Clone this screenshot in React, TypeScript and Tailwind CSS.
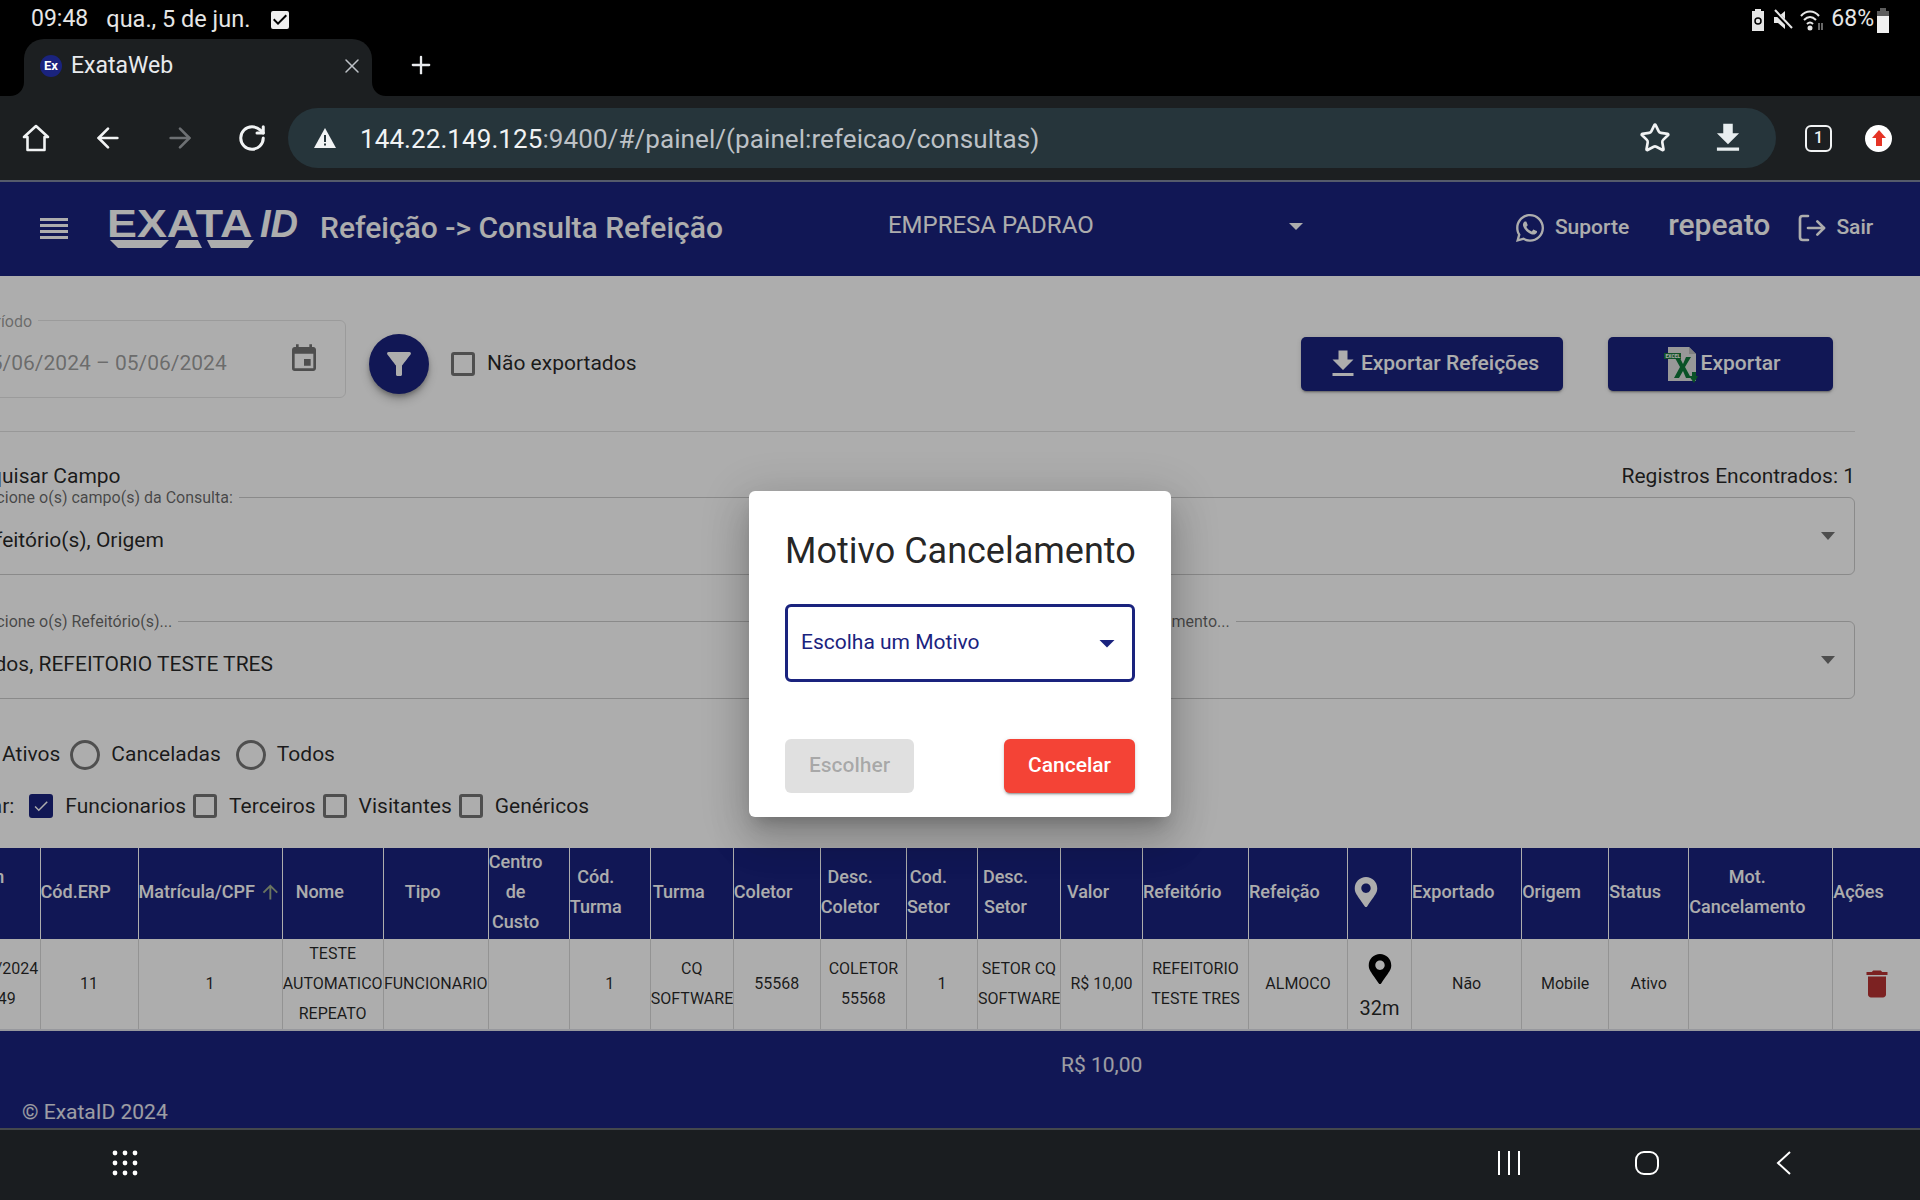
import React from 'react';
import { ArrowLeft, ArrowRight, RotateCw, Star, X, Plus, LogOut } from 'lucide-react';
import { FaWhatsapp, FaMapMarkerAlt } from 'react-icons/fa';
import { MdFilterAlt, MdEvent, MdFileDownload, MdArrowUpward, MdDelete, MdArrowDropDown, MdCheck, MdCheckBox } from 'react-icons/md';

const columns = [
    { w: 'w-[88px]', head: ['Admin', 'Data'], pad: '', cell: ['05/06/2024', '09:49'] },
    { w: 'w-[98px]', head: ['Cód.ERP'], pad: '', cell: ['11'] },
    { w: 'w-[144px]', head: ['Matrícula/CPF'], pad: '', cell: ['1'], sort: true },
    { w: 'w-[101px]', head: ['Nome'], pad: 'pl-[13px]', cell: ['TESTE', 'AUTOMATICO', 'REPEATO'] },
    { w: 'w-[105px]', head: ['Tipo'], pad: 'pl-[21px]', cell: ['FUNCIONARIO'] },
    { w: 'w-[81px]', head: ['Centro', 'de', 'Custo'], pad: '', cell: [''] },
    { w: 'w-[81px]', head: ['Cód.', 'Turma'], pad: '', cell: ['1'] },
    { w: 'w-[83px]', head: ['Turma'], pad: 'pl-[2px]', cell: ['CQ', 'SOFTWARE'] },
    { w: 'w-[87px]', head: ['Coletor'], pad: '', cell: ['55568'] },
    { w: 'w-[86px]', head: ['Desc.', 'Coletor'], pad: '', cell: ['COLETOR', '55568'] },
    { w: 'w-[71px]', head: ['Cod.', 'Setor'], pad: '', cell: ['1'] },
    { w: 'w-[83px]', head: ['Desc.', 'Setor'], pad: 'pl-[5px]', cell: ['SETOR CQ', 'SOFTWARE'] },
    { w: 'w-[82px]', head: ['Valor'], pad: 'pl-[6px]', cell: ['R$ 10,00'] },
    { w: 'w-[106px]', head: ['Refeitório'], pad: '', cell: ['REFEITORIO', 'TESTE TRES'] },
    { w: 'w-[99px]', head: ['Refeição'], pad: '', cell: ['ALMOCO'] },
    { w: 'w-[64px]', head: [], pad: 'pl-[3px]', cell: [], pin: true },
    { w: 'w-[110px]', head: ['Exportado'], pad: '', cell: ['Não'] },
    { w: 'w-[87px]', head: ['Origem'], pad: '', cell: ['Mobile'] },
    { w: 'w-[80px]', head: ['Status'], pad: '', cell: ['Ativo'] },
    { w: 'w-[144px]', head: ['Mot.', 'Cancelamento'], pad: '', cell: [''] },
    { w: 'w-[87px]', head: ['Ações'], pad: '', cell: [], trash: true },
];

const Checkbox = ({ checked, label }: { checked?: boolean; label: string }) => (
    <label className="flex items-center text-[21px] text-black/85">
        <span className={`w-[24px] h-[24px] rounded-[3px] border-[3px] flex items-center justify-center ${checked ? 'bg-[#1a237e] border-[#1a237e]' : 'border-[#757575]'}`}>
            {checked && <MdCheck size={22} className="text-white" />}
        </span>
        <span className="ml-[12px]">{label}</span>
    </label>
);

const Radio = ({ label, className }: { label: string; className?: string }) => (
    <label className={`flex items-center text-[21px] text-black/85 ${className ?? ''}`}>
        <span className="w-[30px] h-[30px] rounded-full border-[3px] border-[#757575]"></span>
        <span className="ml-[11px]">{label}</span>
    </label>
);

const OutlinedSelect = ({ label, value, className }: { label: string; value?: string; className: string }) => (
    <div className={`relative h-[78px] rounded-[6px] border border-black/20 flex items-center pl-[18px] pr-[19px] ${className}`}>
        <span className="absolute left-[7px] -top-[11px] bg-white px-[6px] text-[16px] leading-[22px] text-black/60 whitespace-nowrap">{label}</span>
        <span className="flex-1 text-[21px] text-black/85 whitespace-nowrap pt-[9px]">{value}</span>
        <span className="w-0 h-0 border-l-[7px] border-r-[7px] border-t-[8px] border-l-transparent border-r-transparent border-t-black/55"></span>
    </div>
);

const ExcelIcon = () => (
    <svg width="40" height="40" viewBox="0 0 40 40">
        <path d="M7 3h21l7 7v27H7z" fill="#e0e0e0" />
        <path d="M28 3v7h7z" fill="#bdbdbd" />
        <path d="M3 9h17v6H3z" fill="#1b7a3d" />
        <text x="4.500" y="14" fontSize="5" fontWeight="700" fill="#ffffff">EXCEL</text>
        <path d="M14 14h5l3 6 3-7h5l-6 10 6 11h-5l-3-7-4 7h-5l6-11z" fill="#0f7a3a" />
        <path d="M31 28h4v4h2l-4 7-5-7h3z" fill="#0f7a3a" />
    </svg>
);

const App: React.FC = () => {
    return (
        <div className="w-[1920px] h-[1200px] overflow-hidden flex flex-col bg-black font-['Roboto',sans-serif]">
            {/* status bar */}
            <div className="h-[39px] shrink-0 flex items-center pl-[31px] pr-[31px] text-[23px] text-[#e6e6e6]">
                <span>09:48</span>
                <span className="ml-[18px] text-[23.500px]">qua., 5 de jun.</span>
                <MdCheckBox size={24} className="ml-[18px] text-[#eeeeee]" />
                <div className="flex-1"></div>
                <svg width="14" height="22" viewBox="0 0 14 22"><path d="M4 0h6v2h3v20H1V2h3z" fill="#e6e6e6" /><circle cx="7" cy="12" r="3" fill="none" stroke="#000" strokeWidth="1.500" /></svg>
                <svg width="20" height="22" viewBox="0 0 20 22" className="ml-[8px]" fill="#e6e6e6">
                    <path d="M1 8h4l7-6v18l-7-6H1z" />
                    <path d="M1 2 19 20" stroke="#000" strokeWidth="4" />
                    <path d="M2 1 19 19" stroke="#e6e6e6" strokeWidth="2" />
                </svg>
                <svg width="24" height="22" viewBox="0 0 24 22" className="ml-[7px]" fill="none" stroke="#e6e6e6" strokeWidth="2">
                    <path d="M1 7c5-6 13-6 18 0M4 11c4-4 8-4 12 0M7 15c2-2 4-2 6 0" />
                    <circle cx="10" cy="19" r="1.500" fill="#e6e6e6" />
                    <path d="M19 14v7M22 21v-7" stroke="#8a8a8a" strokeWidth="1.500" />
                </svg>
                <span className="ml-[7px]">68%</span>
                <svg width="12" height="26" viewBox="0 0 12 26" className="ml-[3px]"><path d="M3 1h6v3h3v22H0V4h3z" fill="#5c5c5c" /><path d="M0 9h12v17H0z" fill="#f0f0f0" /></svg>
            </div>

            {/* tab strip */}
            <div className="h-[57px] shrink-0 flex items-center">
                <div className="relative ml-[24px] w-[348px] h-[57px] rounded-t-[20px] bg-[#1c1f21] flex items-center pl-[16px] pr-[8px] pb-[3px] text-[#e8eaed]">
                    <svg width="14" height="14" viewBox="0 0 14 14" className="absolute -left-[14px] bottom-0"><path d="M14 0v14H0C8 14 14 8 14 0z" fill="#1c1f21" /></svg>
                    <svg width="14" height="14" viewBox="0 0 14 14" className="absolute -right-[14px] bottom-0"><path d="M0 0v14h14C6 14 0 8 0 0z" fill="#1c1f21" /></svg>
                    <span className="w-[22px] h-[22px] rounded-full bg-[#1a237e] flex items-center justify-center text-[13px] font-bold text-white">Ex</span>
                    <span className="ml-[9px] flex-1 text-[23px]">ExataWeb</span>
                    <X size={24} className="text-[#bdc1c6]" strokeWidth={1.5} />
                </div>
                <Plus size={28} className="ml-[35px] mb-[6px] text-[#e8eaed]" strokeWidth={2} />
            </div>

            {/* browser toolbar */}
            <div className="h-[84px] shrink-0 bg-[#1c1f21] flex items-center">
                <svg width="30" height="30" viewBox="0 0 30 30" className="ml-[21px]" fill="none" stroke="#f1f3f4" strokeWidth="2.6" strokeLinejoin="round">
                    <path d="M15 3 3 14h3.5v13h17V14H27z" />
                </svg>
                <ArrowLeft size={32} className="ml-[41px] text-[#f1f3f4]" strokeWidth={2} />
                <ArrowRight size={32} className="ml-[40px] text-[#6d7073]" strokeWidth={2} />
                <RotateCw size={30} className="ml-[41px] text-[#f1f3f4]" strokeWidth={2.4} />
                <div className="ml-[21px] w-[1488px] h-[60px] rounded-full bg-[#26353b] flex items-center pl-[25px] pr-[29px]">
                    <svg width="24" height="22" viewBox="0 0 24 22"><path d="M12 1 23 21H1z" fill="#f1f3f4" /><path d="M11 8h2v7h-2zM11 16.500h2v2h-2z" fill="#26353b" /></svg>
                    <span className="ml-[23px] pt-[2px] flex-1 text-[26px] tracking-[0.08px] text-[#bdc1c6] whitespace-nowrap"><span className="text-[#f1f3f4]">144.22.149.125</span>:9400/#/painel/(painel:refeicao/consultas)</span>
                    <Star size={32} className="text-[#f1f3f4]" strokeWidth={2} />
                    <MdFileDownload size={38} className="ml-[38px] text-[#e8eef0]" />
                </div>
                <div className="ml-[29px] w-[27px] h-[27px] rounded-[6px] border-[2.500px] border-[#f1f3f4] flex items-center justify-center text-[16px] font-medium text-[#f1f3f4]">1</div>
                <div className="ml-[33px] w-[27px] h-[27px] rounded-full bg-white flex items-center justify-center">
                    <svg width="14" height="16" viewBox="0 0 14 16" fill="#e53325"><path d="M7 0 14 8H10V16H4V8H0z" /></svg>
                </div>
            </div>

            {/* web page */}
            <div className="relative flex-1 min-h-0 flex flex-col border-t-2 border-[#555b6b] overflow-hidden bg-white">
                <header className="h-[94px] shrink-0 bg-[#1a237e] flex items-center text-white">
                    <svg width="28" height="22" viewBox="0 0 28 22" className="ml-[40px]" fill="currentColor">
                        <rect y="0" width="28" height="3" /><rect y="6" width="28" height="3" /><rect y="12" width="28" height="3" /><rect y="18" width="28" height="3" />
                    </svg>
                    <div className="relative ml-[39px] w-[190px] h-[40px] whitespace-nowrap font-['Liberation_Sans',sans-serif] text-[38px] leading-[30px]">
                        <span className="absolute left-0 top-0 origin-left scale-x-[1.18] font-bold">EXATA</span>
                        <span className="absolute left-[153px] top-0 italic font-bold">ID</span>
                        <svg width="147" height="9" viewBox="0 0 147 9" className="absolute left-0 bottom-0"><path d="M3 0h59l-4 4-4 4H11zM72 0h19l4 8H68zM100 0h47l-6 8H104z" fill="currentColor" /></svg>
                    </div>
                    <h1 className="ml-[23px] -mt-[4px] text-[30px] font-medium whitespace-nowrap">Refeição -&gt; Consulta Refeição</h1>
                    <span className="ml-[165px] text-[24px] w-[402px] -mt-[9px]">EMPRESA PADRAO</span>
                    <span className="-ml-[1px] -mt-[6px] w-0 h-0 border-l-[7px] border-r-[7px] border-t-[7px] border-l-transparent border-r-transparent border-t-white"></span>
                    <FaWhatsapp size={32} className="ml-[211px] -mt-[2px]" />
                    <span className="ml-[9px] -mt-[2px] text-[21px] font-medium">Suporte</span>
                    <span className="ml-[39px] text-[30px] font-medium -mt-[10px]">repeato</span>
                    <LogOut size={32} className="ml-[26px] -mt-[2px] -scale-x-100 rotate-180" strokeWidth={2} />
                    <span className="ml-[8px] -mt-[2px] text-[21px] font-medium">Sair</span>
                </header>

                <section className="h-[572px] shrink-0 overflow-hidden">
                    <div className="w-[1968px] -ml-[48px] pr-[65px] flex flex-col">
                        <div className="mt-[49px] h-[78px] flex items-center">
                            <div className="relative w-[394px] h-[78px] -mt-[10px] rounded-[6px] border border-black/10 flex items-center pl-[26px] pr-[25px]">
                                <span className="absolute left-[18px] -top-[10px] bg-white px-[6px] text-[16px] leading-[22px] text-black/40">Período</span>
                                <span className="flex-1 text-[21px] pt-[10px] text-black/40 whitespace-nowrap">05/06/2024 – 05/06/2024</span>
                                <MdEvent size={32} className="text-black/55" />
                            </div>
                            <button className="ml-[23px] w-[60px] h-[60px] rounded-full bg-[#1a237e] text-white flex items-center justify-center shadow-[0_3px_5px_-1px_rgba(0,0,0,0.3),0_6px_10px_0_rgba(0,0,0,0.2)]">
                                <MdFilterAlt size={36} />
                            </button>
                            <div className="ml-[22px]"><Checkbox label="Não exportados" /></div>
                            <div className="flex-1"></div>
                            <button className="w-[262px] h-[54px] rounded-[5px] bg-[#1a237e] text-white text-[21px] font-medium flex items-center justify-center shadow-[0_3px_1px_-2px_rgba(0,0,0,0.2),0_2px_2px_0_rgba(0,0,0,0.14),0_1px_5px_0_rgba(0,0,0,0.12)]">
                                <MdFileDownload size={36} />
                                <span>Exportar Refeições</span>
                            </button>
                            <button className="ml-[45px] mr-[22px] w-[225px] h-[54px] rounded-[5px] bg-[#1a237e] text-white text-[21px] font-medium flex items-center justify-center shadow-[0_3px_1px_-2px_rgba(0,0,0,0.2),0_2px_2px_0_rgba(0,0,0,0.14),0_1px_5px_0_rgba(0,0,0,0.12)]">
                                <ExcelIcon />
                                <span>Exportar</span>
                            </button>
                        </div>
                        <div className="mt-[28px] h-px bg-black/12"></div>
                        <div className="mt-[30px] h-[30px] flex items-center justify-between text-[21px] text-black/85 pl-[3px]">
                            <span>Pesquisar Campo</span>
                            <span>Registros Encontrados: 1</span>
                        </div>
                        <OutlinedSelect className="mt-[5px]" label="Selecione o(s) campo(s) da Consulta:" value="Refeitório(s), Origem" />
                        <div className="mt-[46px] flex gap-[12px]">
                            <OutlinedSelect className="flex-1" label="Selecione o(s) Refeitório(s)..." value="Todos, REFEITORIO TESTE TRES" />
                            <OutlinedSelect className="flex-1" label="Selecione o(s) Tipo(s) de Processamento..." />
                        </div>
                        <div className="mt-[40px] pl-[9px] flex items-center">
                            <Radio label="Ativos" />
                            <Radio className="ml-[10px]" label="Canceladas" />
                            <Radio className="ml-[15px]" label="Todos" />
                        </div>
                        <div className="mt-[20px] -ml-[16px] flex items-center gap-[7px]">
                            <span className="text-[21px] text-black/85 mr-[8px]">Mostrar:</span>
                            <Checkbox checked label="Funcionarios" />
                            <Checkbox label="Terceiros" />
                            <Checkbox label="Visitantes" />
                            <Checkbox label="Genéricos" />
                        </div>
                    </div>
                </section>

                <table className="w-[1968px] -ml-[48px] table-fixed border-collapse shrink-0">
                    <thead>
                        <tr className="h-[91px] bg-[#1a237e] text-white text-[18px] leading-[30px] font-medium">
                            {columns.map((col, i) => (
                                <th key={i} className={`${col.w} ${col.pad} p-0 text-left font-medium border-r border-white/90 last:border-r-0 whitespace-nowrap overflow-hidden`}>
                                    <div className="h-[91px] pb-[4px] flex items-center">
                                        <div className="text-center">
                                            {col.head.map((line) => <div key={line}>{line}</div>)}
                                            {col.pin && <FaMapMarkerAlt size={30} />}
                                        </div>
                                        {col.sort && <MdArrowUpward size={24} className="ml-[4px] text-[#9dac8d]" />}
                                    </div>
                                </th>
                            ))}
                        </tr>
                    </thead>
                    <tbody>
                        <tr className="h-[90px] text-[16px] leading-[30px] text-black/85 border-b-2 border-[#dfe0e8]">
                            {columns.map((col, i) => (
                                <td key={i} className="p-0 text-center border-r border-black/15 last:border-r-0 whitespace-nowrap overflow-hidden">
                                    {col.cell.map((line) => <div key={line}>{line}</div>)}
                                    {col.pin && (
                                        <div className="flex flex-col items-center pt-[8px] text-[20px]">
                                            <FaMapMarkerAlt size={30} className="text-black" />
                                            <span className="mt-[9px] leading-[30px]">32m</span>
                                        </div>
                                    )}
                                    {col.trash && <MdDelete size={36} className="ml-[26px] text-[#b73333]" />}
                                </td>
                            ))}
                        </tr>
                    </tbody>
                </table>

                <footer className="flex-1 bg-[#1a237e] text-white/90 text-[21px] flex flex-col">
                    <div className="mt-[20px] ml-[1061px] h-[28px] leading-[28px]">R$ 10,00</div>
                    <div className="mt-[19px] ml-[22px] leading-[28px]">© ExataID 2024</div>
                </footer>

                {/* dialog backdrop */}
                <div className="absolute inset-0 bg-black/32 flex items-center justify-center">
                    <div className="w-[422px] h-[326px] mb-[2px] rounded-[6px] bg-white p-[36px] pb-[24px] flex flex-col shadow-[0_11px_15px_-7px_rgba(0,0,0,0.2),0_24px_38px_3px_rgba(0,0,0,0.14),0_9px_46px_8px_rgba(0,0,0,0.12)]">
                        <h2 className="text-[36px] leading-[48px] text-black/87 whitespace-nowrap">Motivo Cancelamento</h2>
                        <div className="mt-[29px] h-[78px] rounded-[6px] border-[3px] border-[#1a237e] flex items-center pl-[13px] pr-[7px] text-[21px] text-[#1a237e]">
                            <span className="flex-1">Escolha um Motivo</span>
                            <MdArrowDropDown size={36} />
                        </div>
                        <div className="mt-[57px] flex justify-between">
                            <button className="w-[129px] h-[54px] rounded-[6px] bg-black/12 text-black/26 text-[21px] font-medium">Escolher</button>
                            <button className="w-[131px] h-[54px] rounded-[6px] bg-[#f44336] text-white text-[21px] font-medium shadow-[0_3px_1px_-2px_rgba(0,0,0,0.2),0_2px_2px_0_rgba(0,0,0,0.14),0_1px_5px_0_rgba(0,0,0,0.12)]">Cancelar</button>
                        </div>
                    </div>
                </div>
            </div>

            {/* android nav bar */}
            <div className="h-[72px] shrink-0 border-t-2 border-[#44484c] bg-[#1a1d20] flex items-center pb-[4px] text-white">
                <svg width="26" height="26" viewBox="0 0 26 26" fill="#fff" className="ml-[112px]">
                    <circle cx="3" cy="3" r="2.400" /><circle cx="13" cy="3" r="2.400" /><circle cx="23" cy="3" r="2.400" />
                    <circle cx="3" cy="13" r="2.400" /><circle cx="13" cy="13" r="2.400" /><circle cx="23" cy="13" r="2.400" />
                    <circle cx="3" cy="23" r="2.400" /><circle cx="13" cy="23" r="2.400" /><circle cx="23" cy="23" r="2.400" />
                </svg>
                <svg width="24" height="24" viewBox="0 0 24 24" stroke="#fff" strokeWidth="2" className="ml-[1359px]"><path d="M2 0v24M12 0v24M22 0v24" /></svg>
                <svg width="24" height="24" viewBox="0 0 24 24" fill="none" stroke="#fff" strokeWidth="2" className="ml-[114px]"><rect x="1" y="1" width="22" height="22" rx="8" /></svg>
                <svg width="16" height="24" viewBox="0 0 16 24" fill="none" stroke="#fff" strokeWidth="2" className="ml-[117px]"><path d="M14 1 2 12l12 11" /></svg>
            </div>
        </div>
    );
};

export default App;
